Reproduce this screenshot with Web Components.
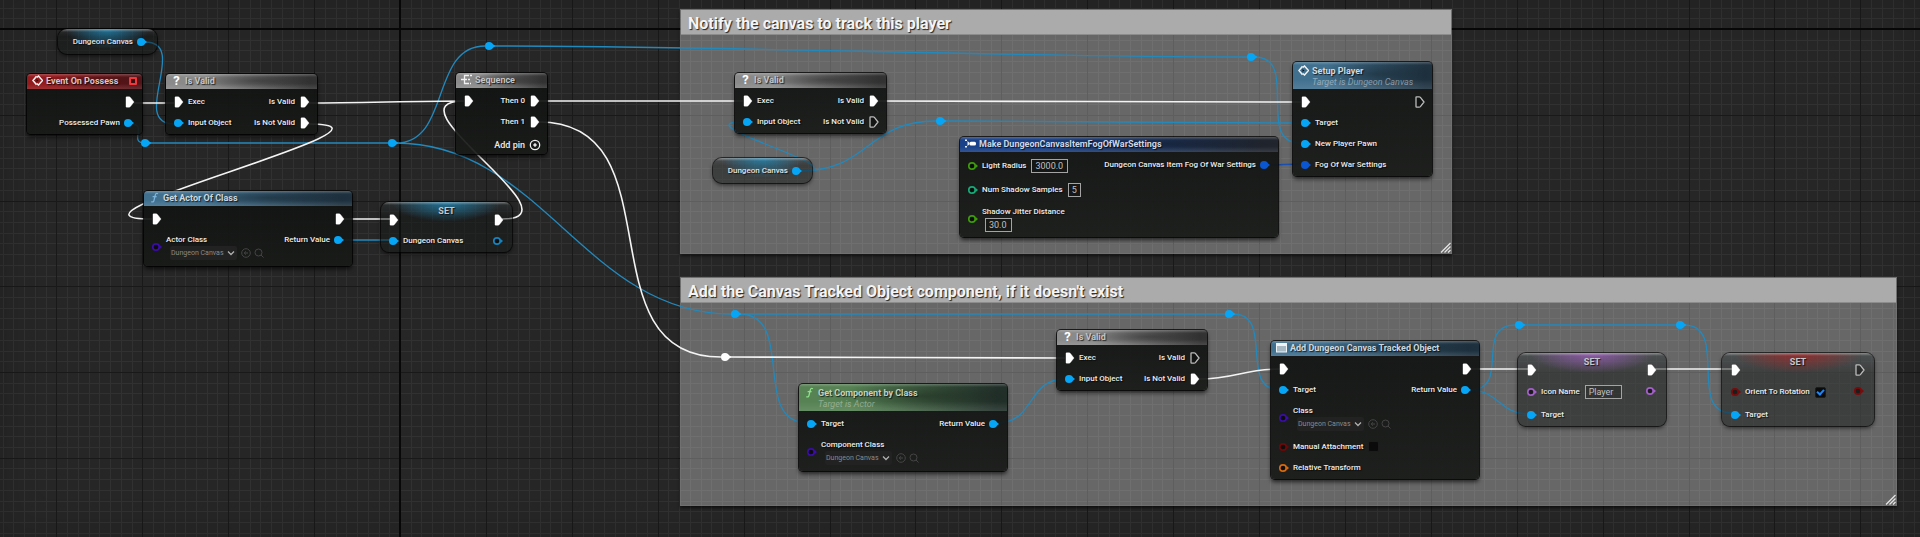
<!DOCTYPE html>
<html lang="en">
<head>
<meta charset="utf-8">
<title>Dungeon Canvas event graph</title>
<style>
  html, body { margin: 0; min-height: 100%; background: #262626; }
  body { font-family: Roboto, "Noto Sans", sans-serif; }
</style>
</head>
<body>
<bp-graph>
  <bp-comment x="680" y="9" w="772" h="245">Notify the canvas to track this player</bp-comment>
  <bp-comment x="680" y="277" w="1217" h="229">Add the Canvas Tracked Object component, if it doesn't exist</bp-comment>

  <bp-wires></bp-wires>

  <bp-knot x="145" y="143"></bp-knot>
  <bp-knot x="392" y="143"></bp-knot>
  <bp-knot x="489" y="46"></bp-knot>
  <bp-knot x="940" y="121"></bp-knot>
  <bp-knot x="1251" y="57"></bp-knot>
  <bp-knot x="735" y="314"></bp-knot>
  <bp-knot x="1229" y="314"></bp-knot>
  <bp-knot x="1519" y="325"></bp-knot>
  <bp-knot x="1680" y="325"></bp-knot>
  <bp-knot x="725" y="357" color="#fff"></bp-knot>

  <bp-getter x="58" y="29" w="99">Dungeon Canvas</bp-getter>
  <bp-getter x="713" y="158" w="99">Dungeon Canvas</bp-getter>

  <bp-node x="27" y="74" w="115" tone="red" icon="event" title="Event On Possess" delegate>
    <bp-pin slot="out" kind="exec"></bp-pin>
    <bp-pin slot="out" kind="data" label="Possessed Pawn"></bp-pin>
  </bp-node>

  <bp-node x="166" y="74" w="151" tone="gray" icon="query" title="Is Valid">
    <bp-pin slot="in" kind="exec" label="Exec"></bp-pin>
    <bp-pin slot="in" kind="data" label="Input Object"></bp-pin>
    <bp-pin slot="out" kind="exec" label="Is Valid"></bp-pin>
    <bp-pin slot="out" kind="exec" label="Is Not Valid"></bp-pin>
  </bp-node>

  <bp-node x="144" y="191" w="208" tone="blue" icon="func" title="Get Actor Of Class">
    <bp-pin slot="in" kind="exec"></bp-pin>
    <bp-pin slot="in" kind="data" open color="#3a0ca8" label="Actor Class" field="class"></bp-pin>
    <bp-pin slot="out" kind="exec"></bp-pin>
    <bp-pin slot="out" kind="data" label="Return Value"></bp-pin>
  </bp-node>

  <bp-set x="381" y="202" w="131" glow="rgba(30,140,190,.75)">
    <bp-pin slot="in" kind="exec"></bp-pin>
    <bp-pin slot="in" kind="data" label="Dungeon Canvas"></bp-pin>
    <bp-pin slot="out" kind="exec"></bp-pin>
    <bp-pin slot="out" kind="data" open color="#1583bd"></bp-pin>
  </bp-set>

  <bp-node x="456" y="73" w="91" tone="gray" icon="sequence" title="Sequence">
    <bp-pin slot="in" kind="exec"></bp-pin>
    <bp-pin slot="out" kind="exec" label="Then 0"></bp-pin>
    <bp-pin slot="out" kind="exec" label="Then 1"></bp-pin>
    <bp-add-pin slot="out">Add pin</bp-add-pin>
  </bp-node>

  <bp-node x="735" y="73" w="151" tone="gray" icon="query" title="Is Valid">
    <bp-pin slot="in" kind="exec" label="Exec"></bp-pin>
    <bp-pin slot="in" kind="data" label="Input Object"></bp-pin>
    <bp-pin slot="out" kind="exec" label="Is Valid"></bp-pin>
    <bp-pin slot="out" kind="exec" open label="Is Not Valid"></bp-pin>
  </bp-node>

  <bp-node x="960" y="137" w="318" tone="navy" icon="make" title="Make DungeonCanvasItemFogOfWarSettings">
    <bp-pin slot="in" kind="data" open color="#3c9a0c" label="Light Radius" field="number" size="37" value="3000.0"></bp-pin>
    <bp-pin slot="in" kind="data" open color="#18a878" label="Num Shadow Samples" field="number" size="13" value="5"></bp-pin>
    <bp-pin slot="in" kind="data" open color="#3c9a0c" label="Shadow Jitter Distance" field="number" size="27" value="30.0" stacked></bp-pin>
    <bp-pin slot="out" kind="data" color="#0a55d0" label="Dungeon Canvas Item Fog Of War Settings"></bp-pin>
  </bp-node>

  <bp-node x="1293" y="62" w="139" tone="blue" icon="event" title="Setup Player" subtitle="Target is Dungeon Canvas">
    <bp-pin slot="in" kind="exec"></bp-pin>
    <bp-pin slot="in" kind="data" label="Target"></bp-pin>
    <bp-pin slot="in" kind="data" label="New Player Pawn"></bp-pin>
    <bp-pin slot="in" kind="data" color="#0a55d0" label="Fog Of War Settings"></bp-pin>
    <bp-pin slot="out" kind="exec" open></bp-pin>
  </bp-node>

  <bp-node x="799" y="384" w="208" tone="green" icon="func" title="Get Component by Class" subtitle="Target is Actor">
    <bp-pin slot="in" kind="data" label="Target"></bp-pin>
    <bp-pin slot="in" kind="data" open color="#3a0ca8" label="Component Class" field="class"></bp-pin>
    <bp-pin slot="out" kind="data" label="Return Value"></bp-pin>
  </bp-node>

  <bp-node x="1057" y="330" w="150" tone="gray" icon="query" title="Is Valid">
    <bp-pin slot="in" kind="exec" label="Exec"></bp-pin>
    <bp-pin slot="in" kind="data" label="Input Object"></bp-pin>
    <bp-pin slot="out" kind="exec" open label="Is Valid"></bp-pin>
    <bp-pin slot="out" kind="exec" label="Is Not Valid"></bp-pin>
  </bp-node>

  <bp-node x="1271" y="341" w="208" tone="blue" icon="component" title="Add Dungeon Canvas Tracked Object">
    <bp-pin slot="in" kind="exec"></bp-pin>
    <bp-pin slot="in" kind="data" label="Target"></bp-pin>
    <bp-pin slot="in" kind="data" open color="#3a0ca8" label="Class" field="class"></bp-pin>
    <bp-pin slot="in" kind="data" open color="#6e0808" label="Manual Attachment" field="check"></bp-pin>
    <bp-pin slot="in" kind="data" open color="#d8690c" label="Relative Transform"></bp-pin>
    <bp-pin slot="out" kind="exec"></bp-pin>
    <bp-pin slot="out" kind="data" label="Return Value"></bp-pin>
  </bp-node>

  <bp-set x="1518" y="353" w="148" glow="rgba(165,95,200,.75)" wide>
    <bp-pin slot="in" kind="exec"></bp-pin>
    <bp-pin slot="in" kind="data" open color="#a35fc8" label="Icon Name" field="text" size="37" value="Player"></bp-pin>
    <bp-pin slot="in" kind="data" label="Target"></bp-pin>
    <bp-pin slot="out" kind="exec"></bp-pin>
    <bp-pin slot="out" kind="data" open color="#a35fc8"></bp-pin>
  </bp-set>

  <bp-set x="1722" y="353" w="152" glow="rgba(175,30,30,.7)" wide>
    <bp-pin slot="in" kind="exec"></bp-pin>
    <bp-pin slot="in" kind="data" open color="#7c0a0a" label="Orient To Rotation" field="check" checked></bp-pin>
    <bp-pin slot="in" kind="data" label="Target"></bp-pin>
    <bp-pin slot="out" kind="exec" open></bp-pin>
    <bp-pin slot="out" kind="data" open color="#7c0a0a"></bp-pin>
  </bp-set>
</bp-graph>

<script>
const BLUE = '#06a5f5';

/* Base for everything that has a place on the free canvas. */
class Placed extends HTMLElement {
  num(name) { return Number(this.getAttribute(name)); }
  render(css, html) {
    const root = this.attachShadow({ mode: 'open' });
    const w = this.hasAttribute('w') ? `width:${this.num('w')}px;` : '';
    root.innerHTML = `<style>
      *{box-sizing:border-box}
      :host{display:block;box-sizing:border-box;position:absolute;left:${this.num('x')}px;top:${this.num('y')}px;${w}}
      ${css}</style>${html}`;
    return root;
  }
}

/* Canvas with the ruled background. */
customElements.define('bp-graph', class extends HTMLElement {
  connectedCallback() {
    const root = this.attachShadow({ mode: 'open' });
    root.innerHTML = `<style>
      :host{display:block;position:relative;min-height:100vh;overflow:hidden;background:#262626}
      svg{position:absolute;inset:0;width:100%;height:100%;overflow:visible}
      path{fill:none;stroke-width:1}
      .minor{stroke:#313131}
      .major{stroke:#191919}
      .origin{stroke:#080808;stroke-width:2}
      .shade{position:absolute;inset:0;pointer-events:none;box-shadow:inset 0 0 40px rgba(0,0,0,.15)}
      </style><svg aria-hidden="true"><path class="minor"/><path class="major"/><path class="origin"/></svg><div class="shade"></div><slot></slot>`;
    const paths = root.querySelectorAll('path');
    const originX = 400, originY = 29, stepX = 859 / 80, stepY = 343 / 32;
    const W = Math.max(innerWidth, 1920), H = Math.max(innerHeight, 540);
    const out = ['', '', ''];
    const add = (i, seg) => { out[i === 0 ? 2 : i % 8 === 0 ? 1 : 0] += seg; };
    for (let i = -Math.floor(originX / stepX); originX + i * stepX < W; i++) {
      const x = Math.round(originX + i * stepX) + (i ? .5 : 0); add(i, `M${x} 0V${H}`);
    }
    for (let i = -Math.floor(originY / stepY); originY + i * stepY < H; i++) {
      const y = Math.round(originY + i * stepY) + (i ? .5 : 0); add(i, `M0 ${y}H${W}`);
    }
    paths.forEach((p, n) => p.setAttribute('d', out[n]));
  }
});

/* Comment frame behind the nodes. */
customElements.define('bp-comment', class extends Placed {
  connectedCallback() {
    this.render(`
      :host{height:${this.num('h')}px;background:rgba(255,255,255,.3);border:1px solid rgba(120,120,120,.55);box-shadow:0 2px 3px rgba(0,0,0,.6)}
      h2{margin:0;height:25px;padding:0 7px;line-height:27px;font-size:16px;font-weight:700;color:#f4f4f4;background:#ababab;
         text-shadow:1px 1px 1px #222;border-bottom:1px solid #8c8c8c}
      svg{position:absolute;right:0;bottom:0;width:11px;height:11px}
    `, `<h2><slot></slot></h2><svg viewBox="0 0 11 11" aria-hidden="true"><path d="M1 10.500 10.500 1M4.500 10.500l6-6M8 10.500 10.500 8" stroke="#e4e4e4" stroke-width="1.300"/></svg>`);
  }
});

/* Connections between pins. */
customElements.define('bp-wires', class extends HTMLElement {
  connectedCallback() {
    // x1, y1, x2, y2, handle length
    const exec = [
      [134,103,174,103,0],[309,103,464,101,50],[309,124,152,219,121],[344,219,390,219,0],
      [502,219,464,101,82],[539,101,743,101,0],[539,122,721,357,140],[877,101,1301,102,90],
      [729,357,1065,358,90],[1199,379,1280,369,36],[1471,369,1528,369,0],[1655,369,1732,369,0]
    ];
    const object = [
      [145,42,174,124,45],[131,124,145,143,17],[149,143,388,143,0],[396,143,485,46,55],
      [396,143,731,314,145],[493,46,1247,57,250],[1255,57,1300,143,45],[800,171,743,122,65],
      [800,171,936,121,70],[944,121,1300,123,90],[739,314,1225,314,0],[739,314,808,423,58],
      [997,423,1065,379,38],[1233,314,1280,390,42],[1470,390,1515,325,42],[1470,390,1528,414,28],
      [1523,325,1676,325,0],[1684,325,1732,413,46],[343,240,390,240,0]
    ];
    const struct = [[1268,165,1300,164,8]];
    const d = list => list.map(([a, b, c, e, k]) => `M${a} ${b}C${a + k} ${b} ${c - k} ${e} ${c} ${e}`).join('');
    this.attachShadow({ mode: 'open' }).innerHTML = `<style>
      :host{display:block;position:absolute;inset:0}
      svg{width:100%;height:100%;overflow:visible;display:block}
      path{fill:none}
      </style><svg aria-hidden="true">
      <path d="${d(object)}" stroke="#2289bd" stroke-width="1.300"/>
      <path d="${d(struct)}" stroke="#1b4fb0" stroke-width="1.300"/>
      <path d="${d(exec)}" stroke="#f4f4f4" stroke-width="1.600"/></svg>`;
  }
});

/* Reroute point, centred on its x/y. */
customElements.define('bp-knot', class extends Placed {
  connectedCallback() {
    const c = this.getAttribute('color') || BLUE;
    this.render(`:host{width:12px;height:10px;margin:-5px 0 0 -5px}svg{display:block}`,
      `<svg width="12" height="10" aria-hidden="true"><path d="M8 2.500 11.500 5 8 7.500z" fill="${c}"/><circle cx="5" cy="5" r="4" fill="${c}"/></svg>`);
  }
});

const pinGlyph = (kind, open, color, out) => {
  const s = out ? 2 : 0;
  if (kind === 'exec') {
    const x = s + 1;
    return `<path d="M${x + .5} .8h2.600q.8 0 1.300.6l3.600 4.600-3.600 4.600q-.5.6-1.300.6h-2.600q-.5 0-.5-.6v-9.200q0-.6.5-.6z"
      fill="${open ? 'rgba(0,0,0,.3)' : '#fff'}" stroke="${open ? '#bbb' : '#fff'}" stroke-width="${open ? 1.3 : .4}"/>`;
  }
  const c = out ? 5 : 4;
  return open
    ? `<path d="M${c + 3.5} 3.800 ${c + 6} 6l-2.500 2.200z" fill="${color}"/><circle cx="${c}" cy="6" r="3.200" fill="rgba(0,0,0,.55)" stroke="${color}" stroke-width="1.700"/>`
    : `<path d="M${c + 2} 2.800 ${c + 6} 6 ${c + 2} 9.200z" fill="${color}"/><circle cx="${c}" cy="6" r="4" fill="${color}"/>`;
};

/* One pin row: glyph, label and, where it has one, its default-value field. */
customElements.define('bp-pin', class extends HTMLElement {
  connectedCallback() {
    const a = n => this.getAttribute(n);
    const out = a('slot') === 'out', field = a('field'), label = a('label') || '';
    const glyph = `<svg class="pin" width="11" height="12" viewBox="0 0 11 12" aria-hidden="true">${pinGlyph(a('kind'), this.hasAttribute('open'), a('color') || BLUE, out)}</svg>`;
    let control = '';
    if (field === 'number' || field === 'text')
      control = `<input id="f" type="text" value="${a('value')}">`;
    if (field === 'check')
      control = `<input id="f" type="checkbox" ${this.hasAttribute('checked') ? 'checked' : ''}>`;
    if (field === 'class')
      control = `<span class="asset"><select id="f"><option>Dungeon Canvas</option></select>
        <svg class="chev" width="8" height="6" aria-hidden="true"><path d="M1 1.500 4 4.500 7 1.500" stroke="#b0b0b0" stroke-width="1.300" fill="none"/></svg>
        <button aria-label="Use selected asset"><svg width="10" height="10"><circle cx="5" cy="5" r="4.300"/><path d="M3 5h4M5 3.300 3.200 5 5 6.700"/></svg></button>
        <button aria-label="Browse to asset"><svg width="10" height="10"><circle cx="4.500" cy="4.500" r="3.500"/><path d="M7 7l2.500 2.500"/></svg></button></span>`;
    const stacked = this.hasAttribute('stacked') || field === 'class';
    const height = field === 'class' ? 36 : this.hasAttribute('stacked') ? 34 : field && !(field === 'check' && !this.hasAttribute('checked')) ? 24 : 21;
    const text = label ? (field ? `<label for="f">${label}</label>` : `<span>${label}</span>`) : '';
    this.attachShadow({ mode: 'open' }).innerHTML = `<style>
      *{box-sizing:border-box}
      :host{display:flex;align-items:center;gap:3px;height:${height}px;justify-content:${out ? 'flex-end' : 'flex-start'};
        font-size:8px;font-weight:500;line-height:12px;color:#ececec;white-space:nowrap;text-shadow:1px 1px 1px rgba(0,0,0,.7)}
      .pin{flex:none;display:block;overflow:visible}
      .body{display:flex;align-items:${stacked ? 'flex-start' : 'center'};gap:${stacked ? 0 : 5}px;flex-direction:${stacked ? 'column' : 'row'}}
      input[type=text]{font:400 9px/12px Roboto,sans-serif;color:#c0c0c0;background:rgba(0,0,0,.15);border:1px solid #a4a4a4;
        width:${a('size')}px;height:14px;padding:0 3px;margin:0 ${stacked ? 3 : 0}px;outline:0;border-radius:0}
      input[type=checkbox]{appearance:none;margin:0;width:11px;height:11px;background:#0b0b0b;border-radius:2px;border:1px solid #1c1c1c;display:grid;place-items:center}
      input[type=checkbox]:checked::after{content:"";width:3px;height:5px;border:solid #2287f5;border-width:0 2px 2px 0;transform:rotate(42deg);margin-top:-2px}
      .asset{display:flex;align-items:center;height:14px;margin-left:4px;gap:3px}
      select{appearance:none;font:400 7px/13px Roboto,sans-serif;color:#8a8a8a;background:#212221;border:0;height:14px;width:67px;padding:0 1px;margin:0;border-radius:2px}
      .chev{margin-left:-13px;margin-right:3px;pointer-events:none}
      button{background:none;border:0;padding:0;margin:0;display:block;height:10px}
      button svg{display:block;fill:none;stroke:#444;stroke-width:1}
      </style>${out ? `<span class="body">${text}${control}</span>${glyph}` : `${glyph}<span class="body">${text}${control}</span>`}`;
  }
});

customElements.define('bp-add-pin', class extends HTMLElement {
  connectedCallback() {
    this.attachShadow({ mode: 'open' }).innerHTML = `<style>
      :host{display:flex;justify-content:flex-end;align-items:center;margin-top:4px;height:17px}
      button{display:flex;align-items:center;gap:4px;border:0;padding:0;margin:0 -2px 0 0;background:none;color:#ececec;font:500 9px/12px Roboto,sans-serif;white-space:nowrap}
      </style><button><slot></slot><svg width="12" height="12" fill="none" stroke="#eee" stroke-width="1.300" aria-hidden="true"><circle cx="6" cy="6" r="4.700"/><path d="M4.300 6h3.400M6 4.300v3.400" stroke-width="1.500"/></svg></button>`;
  }
});

const ICONS = {
  event: `<svg width="11" height="11" fill="none"><path d="M4.500 1.300 1 5.500l3.500 4.200M4.800 2.500 6.500 1l4 4.500-4 4.500-1.700-1.500" stroke="#f2f2f2" stroke-width="1.500"/><path d="M4.500 4v3l2-1.500z" fill="#111"/></svg>`,
  query: `<b>?</b>`,
  func: `<svg width="11" height="11" fill="none" stroke="var(--ico)" stroke-width="1.300"><path d="M9 1.800Q6.800.6 6.300 3L5 8.300Q4.500 10.600 2.300 9.700M3.600 4.700h4"/></svg>`,
  sequence: `<svg width="11" height="11" fill="none" stroke="#f2f2f2" stroke-width="1.300"><path d="M0 5.500h3M8 1.500H3.500v8H8M3.500 5.500H6M7 5.500h2M9 1.500h2M9 9.500h1"/></svg>`,
  make: `<svg width="11" height="11"><path d="M0 1.500h2v1.500H0zM0 8h2v1.500H0zM2.500 3l2 1.800v1.400L2.500 8" fill="#e8eef8"/><rect x="4.500" y="3.800" width="6.500" height="3.600" rx="1.500" fill="#fff"/></svg>`,
  component: `<svg width="11" height="11"><rect y="1" width="11" height="9.500" fill="#f0f4f7"/><path d="M1 4h9v5.500H1z" fill="#a9b9c4"/></svg>`
};
const TONES = {
  red:   ['#931a1d', '#54161a', '#d8c4c4', '#fff'],
  gray:  ['#8a8a8a', '#343434', '#c4c4c4', '#fff'],
  blue:  ['#41708f', '#1f3240', '#cfd8de', '#7db4dc'],
  navy:  ['#1b4288', '#21262f', '#cdd6e4', '#fff'],
  green: ['#568254', '#22302a', '#c2d0c0', '#8fe08a']
};

/* Node with a titled header and two columns of pins. */
customElements.define('bp-node', class extends Placed {
  connectedCallback() {
    const [from, to, ink, ico] = TONES[this.getAttribute('tone')];
    const sub = this.getAttribute('subtitle'), title = this.getAttribute('title');
    this.removeAttribute('title');
    this.render(`
      :host{--ico:${ico};border-radius:4px;overflow:hidden;background:linear-gradient(rgba(16,18,17,.93),rgba(24,26,24,.93));
        box-shadow:0 0 0 1px rgba(0,0,0,.75),0 3px 4px rgba(0,0,0,.65);padding-bottom:1px}
      header{display:flex;gap:3px;height:${sub ? 27 : 15}px;padding:${sub ? '3px' : '1px'} 6px 0 5px;
        background:linear-gradient(rgba(255,255,255,.22),transparent 3px,transparent 65%,rgba(255,255,255,.1)),
        radial-gradient(ellipse 45% 50% at 60% 45%,rgba(0,0,0,.28),transparent),
        linear-gradient(90deg,${from} 25%,${to} 95%)}
      header>svg,header>b{flex:none;width:11px;height:11px}
      b{font-size:13px;line-height:12px;color:#fff;text-align:center}
      h3,p{margin:0;white-space:nowrap;font-size:9px;text-shadow:1px 1px 1px rgba(0,0,0,.7)}
      h3{line-height:12px;font-weight:700;color:${ink}}
      p{line-height:11px;font-style:italic;font-weight:400;color:${ink};opacity:.55;text-shadow:none}
      i{margin:2px -1px 0 auto;width:8px;height:8px;border:2px solid #f0383c;background:#3a0d0f;border-radius:1px}
      section{display:flex;justify-content:space-between;padding:2px 8px 0 8px}
    `, `<header>${ICONS[this.getAttribute('icon')]}<div><h3>${title}</h3>${sub ? `<p>${sub}</p>` : ''}</div>${this.hasAttribute('delegate') ? '<i></i>' : ''}</header>
      <section><div><slot name="in"></slot></div><div><slot name="out"></slot></div></section>`);
  }
});

const glass = glow => `background:linear-gradient(rgba(255,255,255,.35),transparent 3px),
  radial-gradient(ellipse 42% 20px at 50% 0,${glow},transparent),
  linear-gradient(rgba(50,58,60,.5),rgba(18,20,20,.5) 30%,rgba(22,24,24,.5));
  box-shadow:0 0 0 1px rgba(0,0,0,.6),0 2px 4px rgba(0,0,0,.6);`;

/* Compact setter node. */
customElements.define('bp-set', class extends Placed {
  connectedCallback() {
    this.render(`
      :host{display:grid;border-radius:8px;overflow:hidden;padding-bottom:1px;${glass(this.getAttribute('glow'))}}
      h3,section{grid-area:1/1}
      h3{margin:3px 0 0;text-align:center;font-size:9px;line-height:12px;font-weight:700;color:#c4c8ca;text-shadow:1px 1px 1px rgba(0,0,0,.7)}
      section{display:flex;justify-content:space-between;padding:${this.hasAttribute('wide') ? '6px 10px 0 9px' : '7px 9px 0 8px'}}
    `, `<h3>SET</h3><section><div><slot name="in"></slot></div><div><slot name="out"></slot></div></section>`);
  }
});

/* Variable getter pill. */
customElements.define('bp-getter', class extends Placed {
  connectedCallback() {
    this.render(`
      :host{display:flex;align-items:center;justify-content:flex-end;gap:3px;height:25px;padding-right:10px;border-radius:9px;
        font-size:8px;font-weight:500;line-height:12px;color:#e2e2e2;white-space:nowrap;text-shadow:1px 1px 1px rgba(0,0,0,.7);${glass('rgba(30,140,190,.75)')}}
    `, `<span><slot></slot></span><svg width="11" height="12" aria-hidden="true">${pinGlyph('data', false, BLUE, true)}</svg>`);
  }
});
</script>
</body>
</html>
